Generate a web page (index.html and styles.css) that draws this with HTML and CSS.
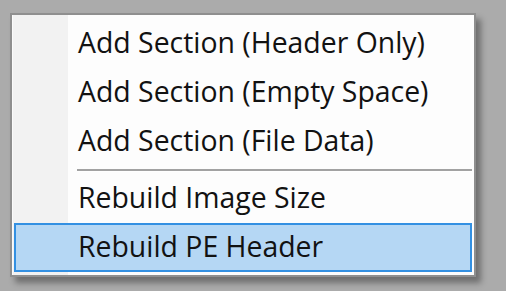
FILE: index.html
```html
<!DOCTYPE html>
<html lang="en">
<head>
    <meta charset="UTF-8">
    <title>Section Menu</title>
    <link rel="stylesheet" href="styles.css">
</head>
<body>
    <!-- Context Menu -->
    <div class="menu">
        <div class="menu-item">Add Section (Header Only)</div>
        <div class="menu-item">Add Section (Empty Space)</div>
        <div class="menu-item">Add Section (File Data)</div>
        <div class="menu-separator"></div>
        <div class="menu-item">Rebuild Image Size</div>
        <div class="menu-item active">Rebuild PE Header</div>
    </div>
</body>
</html>
```

FILE: styles.css
```css
/* Reset */
* {
    margin: 0;
    padding: 0;
    box-sizing: border-box;
}

body {
    background: #ababab;
    font-family: 'Open Sans', 'Noto Sans', sans-serif;
    color: #121212;
    height: 291px;
    overflow: hidden;
}

/* Menu box */
.menu {
    width: 466px;
    margin: 13px 0 0 10px;
    border: 2px solid #8f8f8f;
    padding: 4px 2px 3px 2px;
    background: linear-gradient(to right, #fbfbfb 0, #fbfbfb 1px, #f2f2f2 1px, #f2f2f2 56px, #fdfdfd 56px);
    box-shadow: 5px 6px 6px rgba(0, 0, 0, 0.35);
}

.menu-item {
    height: 49px;
    display: flex;
    align-items: center;
    padding-left: 62px;
    padding-bottom: 2px;
    border: 2px solid transparent;
    font-size: 28.4px;
    line-height: 1;
    white-space: nowrap;
}

.menu-item.active {
    background: #b5d7f4;
    border-color: #3390e2;
}

.menu-separator {
    height: 8px;
    padding-top: 3px;
    margin-left: 63px;
}

.menu-separator::before {
    content: '';
    display: block;
    height: 2px;
    background: #a2a2a2;
    border-bottom: 1px solid #fff;
}
```
